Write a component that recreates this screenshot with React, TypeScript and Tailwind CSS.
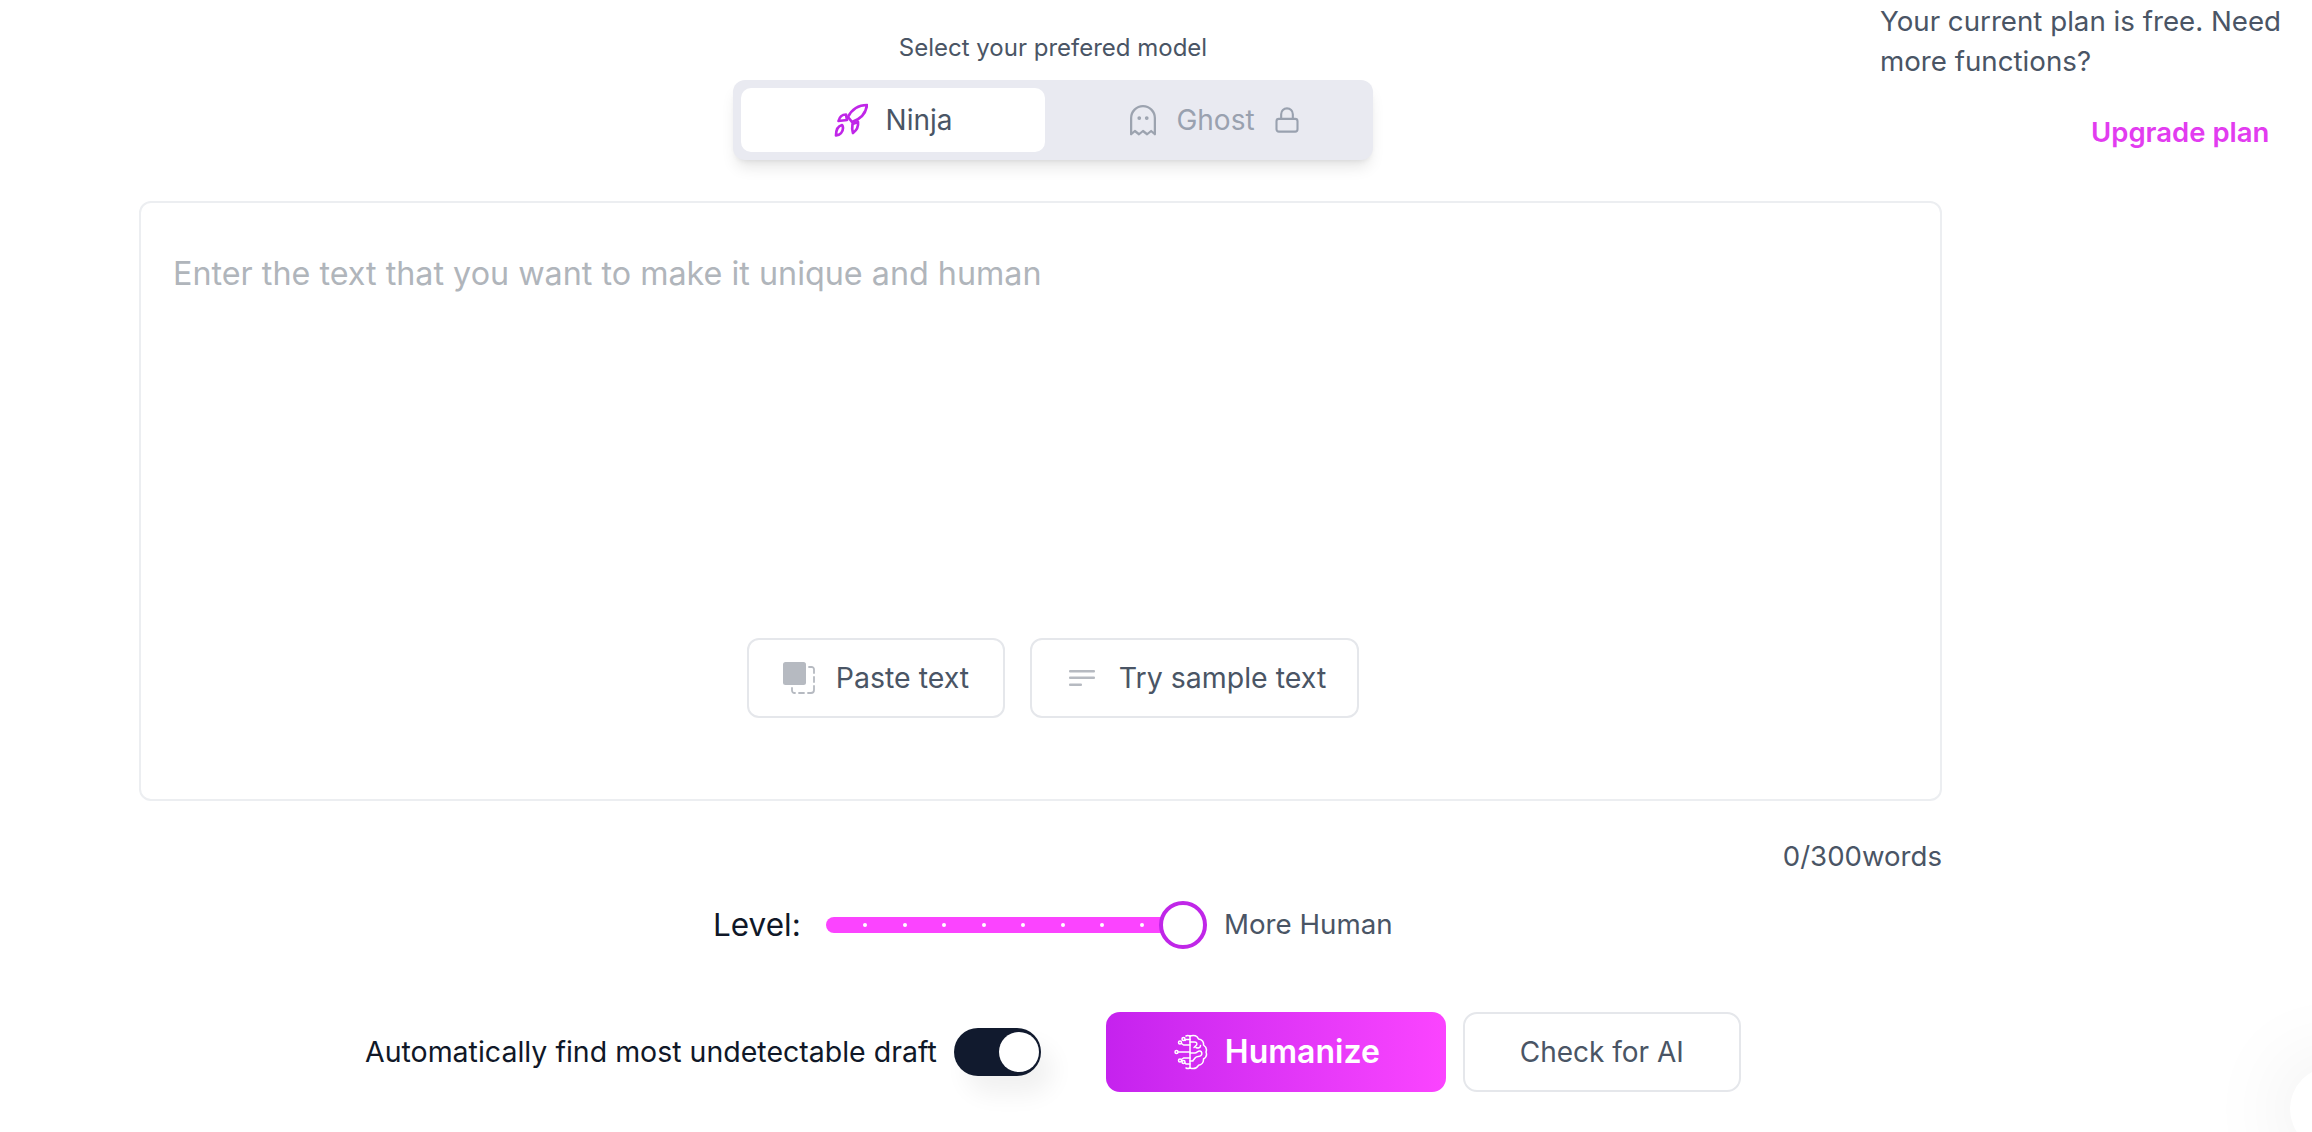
import { Lock } from 'lucide-react';

const fontClass = "font-['Inter','Noto_Sans',sans-serif]";

function RocketIcon() {
  return (
    <svg width="34" height="34" viewBox="9 7 34 34" fill="none" stroke="#c026e8" strokeWidth="2.700" strokeLinejoin="round" strokeLinecap="round">
      <path d="M42 9C34 9 27 13 23 21L27 26C36 23 41 17 42 9Z" />
      <path d="M21 18.500C17 18.500 14.500 21 13.500 25C16 24.500 19 24.500 22 24Z" />
      <path d="M33 26C33.500 30 32 34 28 37C27 34 27 31 27.500 28Z" />
      <path d="M17 29C13 30 11 34 11 39.500C15 39 18 36 18 32C18 30.500 17.500 29.500 17 29Z" />
    </svg>
  );
}

function GhostIcon() {
  return (
    <svg width="30" height="33" viewBox="0 0 24 26" fill="none" stroke="#9ca3af" strokeWidth="1.800" strokeLinejoin="round">
      <path d="M2.500 24V11a9.500 9.500 0 0 1 19 0v13l-3-2.600-3.200 2.600-3.300-2.600-3.200 2.600-3.300-2.600z" />
      <circle cx="9" cy="11" r=".6" fill="#9ca3af" />
      <circle cx="15" cy="11" r=".6" fill="#9ca3af" />
    </svg>
  );
}

function PasteIcon() {
  return (
    <svg width="32" height="32" viewBox="0 0 32 32" fill="none">
      <rect x="0" y="0" width="23" height="23" rx="2.500" fill="#b6bac1" />
      <path d="M26 5h2.500a2.500 2.500 0 0 1 2.500 2.500V11M31 15v5M31 24v4a3 3 0 0 1-3 3h-3M21 31h-5M12 31h-.5A2.500 2.500 0 0 1 9 28.500V26" stroke="#b6bac1" strokeWidth="1.800" strokeLinecap="round" />
    </svg>
  );
}

function LinesIcon() {
  return (
    <svg width="26" height="16" viewBox="0 0 26 16" fill="#b6bac1">
      <rect width="26" height="2.500" rx="1" />
      <rect y="6.500" width="26" height="2.500" rx="1" />
      <rect y="13.500" width="13" height="2.500" rx="1" />
    </svg>
  );
}

function BrainIcon() {
  return (
    <svg width="36" height="36" viewBox="0 0 36 36" fill="none" stroke="#ffffff" strokeWidth="1.500" strokeLinecap="round" strokeLinejoin="round">
      <path d="M18 2v32" />
      <path d="M18 2c-1.500-.6-3-.6-4 0M18 34c-1.500.6-3 .6-4 0" />
      <path d="M18 2c4-1.500 7.500 0 8.500 3 3.500.3 5.500 3 5 6 2.500 1.700 3.500 4.500 2.500 7 1 2.500 0 5.500-2.500 7 .2 3.500-2 6-5 6.300-1.500 2.700-5 3.800-8.500 2.700" />
      <path d="M18 8h4.500c2 0 3 1.500 2 3l-2.500 2.500M24 13.500c2 1 4.500.5 4.500-2M18 19h5c2 0 3-2.500 5-2 2 .5 2.500 3 1 4.500-1.500 1.500-4 .5-5.500 2l-2.500 3M18 27h3" />
      <path d="M18 5.500h-4l-1 1M18 11h-6.500l-2-1.500M18 18H6.500M18 24h-6.500l-2 1.500M18 30h-4l-1-1" />
      <circle cx="11.500" cy="5" r="1.500" />
      <circle cx="8" cy="8.500" r="1.500" />
      <circle cx="4.500" cy="18" r="1.500" />
      <circle cx="8" cy="26.500" r="1.500" />
      <circle cx="11.500" cy="28" r="1.500" />
    </svg>
  );
}

const ticks = [0, 1, 2, 3, 4, 5, 6, 7];

export default function App() {
  return (
    <div className={`relative h-[1132px] w-[2312px] overflow-hidden bg-white text-gray-600 ${fontClass}`}>
      <aside className="absolute left-[1880px] top-[1px] w-[420px]">
        <p className="text-[27.700px] leading-[40px]">Your current plan is free. Need more functions?</p>
        <p className="mt-[31px] pl-[211px] text-[27.500px] font-semibold leading-[40px] text-[#e23cf0]">Upgrade plan</p>
      </aside>

      <main className="ml-[139px] flex w-[1803px] flex-col">
        <p className="mt-[33px] pl-[25px] text-center text-[24px] leading-[30px]">Select your prefered model</p>
        <div className="mt-[17px] flex justify-center pl-[25px]">
          <div className="flex h-[80px] w-[640px] rounded-[12px] bg-[#e9eaf1] p-[8px] shadow-lg">
            <button type="button" className="flex h-[64px] w-[304px] items-center justify-center gap-[18px] rounded-[10px] bg-white text-[28px]">
              <RocketIcon />
              Ninja
            </button>
            <button type="button" className="flex h-[64px] flex-1 items-center justify-center gap-[18px] pl-[19px] text-[28px] text-gray-400">
              <GhostIcon />
              <span className="flex items-center gap-[18px]">
                Ghost
                <Lock size={28} strokeWidth={1.8} />
              </span>
            </button>
          </div>
        </div>

        <section className="mt-[41px] flex h-[600px] flex-col rounded-[12px] border-2 border-[#eceef1] px-[32px]">
          <p className="mt-[51px] text-[32.300px] leading-[40px] text-[#b0b5bb]">Enter the text that you want to make it unique and human</p>
          <div className="mt-[344px] flex justify-center gap-[25px] pl-[25px]">
            <button type="button" className="flex h-[80px] w-[258px] items-center justify-center gap-[21px] rounded-[12px] border-2 border-gray-200 text-[28.500px]">
              <PasteIcon />
              Paste text
            </button>
            <button type="button" className="flex h-[80px] w-[329px] items-center justify-center gap-[24px] rounded-[12px] border-2 border-gray-200 pl-[6px] text-[28.500px]">
              <LinesIcon />
              Try sample text
            </button>
          </div>
        </section>

        <p className="mt-[40px] text-right text-[27.600px] leading-[30px]">0/300words</p>

        <div className="mt-[30px] flex h-[48px] items-center pl-[574px]">
          <span className="w-[113px] text-[31.500px] text-gray-900">Level:</span>
          <div className="relative h-[16px] w-[380px] rounded-full bg-[#fb44ff]">
            <div className="flex h-full items-center gap-[35.500px] pl-[37px]">
              {ticks.map((tick) => (
                <span key={tick} className="h-[4px] w-[4px] rounded-full bg-white" />
              ))}
            </div>
            <span className="absolute right-[-1px] top-[-16px] h-[48px] w-[48px] rounded-full border-[4px] border-[#c026e8] bg-white" />
          </div>
          <span className="ml-[18px] text-[27.700px]">More Human</span>
        </div>

        <div className="mt-[63px] flex h-[80px] items-center pl-[226px]">
          <span className="text-[28.500px] text-gray-900">Automatically find most undetectable draft</span>
          <div className="ml-[17px] flex h-[48px] w-[87px] items-center justify-end rounded-full bg-[#111a2e] pr-[2px] shadow-[12px_18px_24px_rgba(0,0,0,0.06)]">
            <span className="h-[40px] w-[40px] rounded-full bg-white" />
          </div>
          <button type="button" className="ml-[65px] flex h-[80px] w-[340px] items-center justify-center gap-[17px] rounded-[14px] bg-gradient-to-r from-[#c522ee] to-[#fb44ff] text-[32px] font-semibold text-white">
            <BrainIcon />
            Humanize
          </button>
          <button type="button" className="ml-[17px] h-[80px] w-[278px] rounded-[14px] border-2 border-gray-200 text-[28px]">
            Check for AI
          </button>
        </div>
      </main>

      <div className="absolute left-[2290px] top-[1067px] h-[84px] w-[84px] rounded-full bg-white shadow-[0_0_90px_rgba(0,0,0,0.1)]" />
    </div>
  );
}
